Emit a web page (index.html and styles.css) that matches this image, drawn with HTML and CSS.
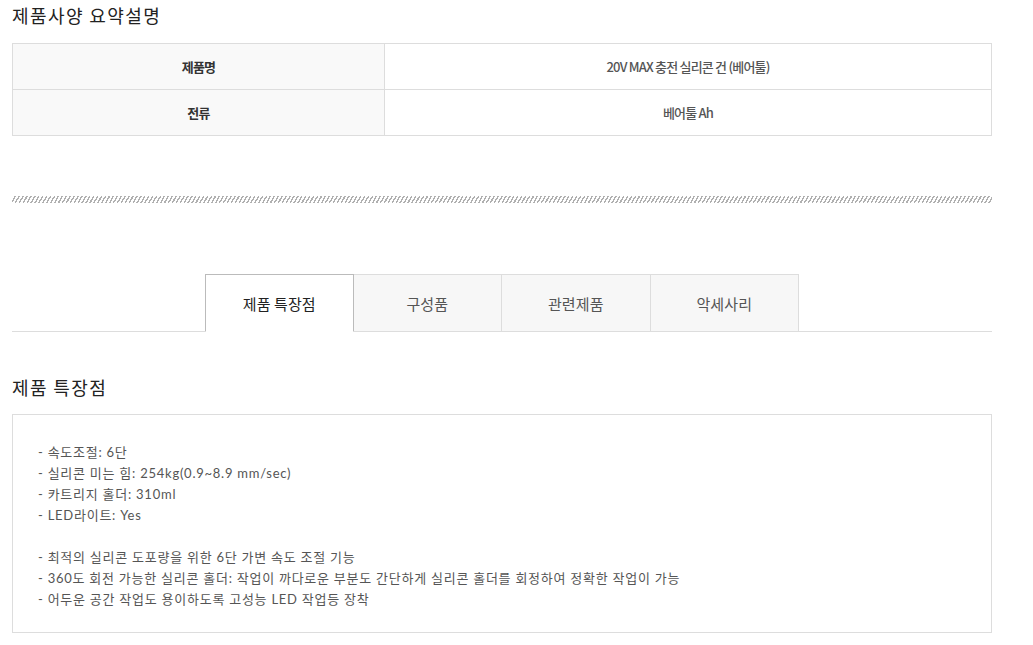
FILE: index.html
```html
<!DOCTYPE html>
<html>
<head>
<meta charset="utf-8">
<title>제품사양 요약설명</title>
<link rel="stylesheet" href="styles.css">
</head>
<body>
  <div class="wrap">
    <h2 class="title">제품사양 요약설명</h2>
    <table class="spec">
      <tr>
        <th>제품명</th>
        <td>20V MAX 충전 실리콘 건 (베어툴)</td>
      </tr>
      <tr>
        <th>전류</th>
        <td>베어툴 Ah</td>
      </tr>
    </table>

    <div class="hatch"></div>

    <ul class="tabs">
      <li class="tab on">제품 특장점</li>
      <li class="tab">구성품</li>
      <li class="tab">관련제품</li>
      <li class="tab">악세사리</li>
    </ul>

    <h2 class="title sub">제품 특장점</h2>
    <div class="feature">
      <p>- 속도조절: 6단</p>
      <p>- 실리콘 미는 힘: 254kg(0.9~8.9 mm/sec)</p>
      <p>- 카트리지 홀더: 310ml</p>
      <p>- LED라이트: Yes</p>
      <p>&nbsp;</p>
      <p>- 최적의 실리콘 도포량을 위한 6단 가변 속도 조절 기능</p>
      <p>- 360도 회전 가능한 실리콘 홀더: 작업이 까다로운 부분도 간단하게 실리콘 홀더를 회정하여 정확한 작업이 가능</p>
      <p>- 어두운 공간 작업도 용이하도록 고성능 LED 작업등 장착</p>
    </div>
  </div>
</body>
</html>
```

FILE: styles.css
```css
body {
  margin: 0;
  background: #fff;
  font-family: 'Noto Sans CJK KR', 'Noto Sans', sans-serif;
  color: #333;
}

.wrap {
  width: 980px;
  margin-left: 12px;
}

.title {
  margin: 0;
  padding-top: 3px;
  font-size: 18px;
  line-height: 24px;
  font-weight: 400;
  color: #222;
  letter-spacing: 1.4px;
}

.spec {
  width: 100%;
  margin-top: 16px;
  border-collapse: collapse;
  font-size: 13px;
  letter-spacing: -0.8px;
}

.spec th,
.spec td {
  height: 45px;
  padding: 0;
  border: 1px solid #ddd;
  text-align: center;
  vertical-align: middle;
}

.spec th {
  width: 371px;
  background: #f9f9f9;
  font-weight: 700;
  color: #333;
}

.spec td {
  color: #555;
  font-weight: 500;
}

.hatch {
  height: 7px;
  margin-top: 60px;
  background: repeating-linear-gradient(-60deg, #fff 0, #fff 2px, #b0b0b0 2px, #b0b0b0 3.4px);
}

.tabs {
  display: flex;
  justify-content: center;
  margin: 71px 0 0;
  padding: 0;
  list-style: none;
  border-bottom: 1px solid #ddd;
}

.tab {
  box-sizing: border-box;
  width: 148.5px;
  height: 58px;
  margin-bottom: -1px;
  display: flex;
  justify-content: center;
  align-items: center;
  border: 1px solid #ddd;
  border-left: none;
  background: #f7f7f7;
  font-size: 15px;
  color: #555;
  letter-spacing: 0.1px;
}

.tab.on {
  border: 1px solid #bbb;
  border-bottom-color: #fff;
  background: #fff;
  color: #222;
}

.sub {
  margin-top: 40px;
}

.feature {
  margin-top: 15px;
  padding: 27px 25px 22px;
  border: 1px solid #ddd;
  font-family: Lato, 'Noto Sans CJK KR', sans-serif;
  font-size: 13px;
  line-height: 21px;
  color: #555;
  letter-spacing: 0.75px;
}

.feature p {
  margin: 0;
}
```
